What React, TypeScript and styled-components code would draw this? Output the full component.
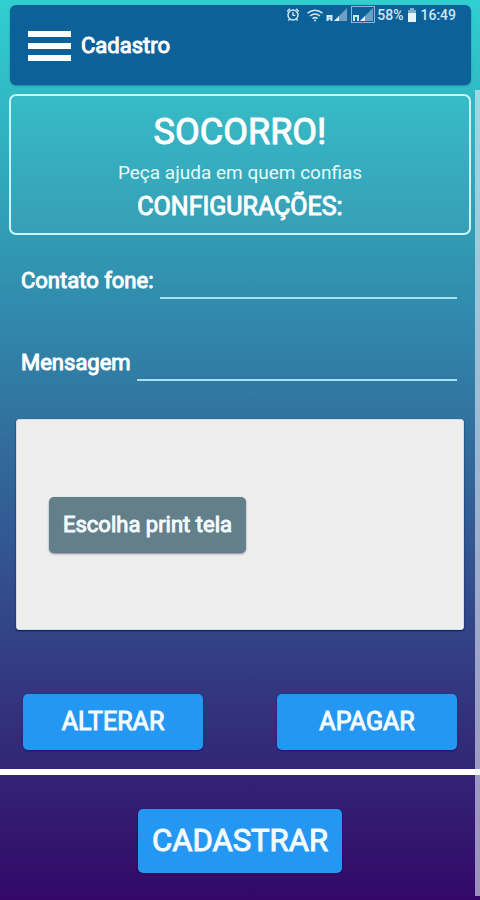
import React from "react";
import styled, { createGlobalStyle, css } from "styled-components";

const GlobalStyle = createGlobalStyle`
  *, *::before, *::after { box-sizing: border-box; }
  body { margin: 0; font-family: Roboto, "Liberation Sans", sans-serif; color: #fff; }
  button, input { font: inherit; color: inherit; }
`;

const emboldened = css`
  font-weight: 400;
  -webkit-text-stroke: 1px currentColor;
`;

const Screen = styled.div`
  position: relative;
  display: flex;
  flex-direction: column;
  min-height: 100vh;
  background: linear-gradient(#30cfd0, #330867);
`;

const Header = styled.header`
  display: flex;
  flex-direction: column;
  margin: 5px 9px 0 10px;
  padding-bottom: 18px;
  border-radius: 6px;
  background: #0b6198;
  box-shadow: 0 1px 2px rgba(0, 60, 90, 0.4);
`;

const StatusBar = styled.div`
  display: flex;
  align-items: center;
  justify-content: flex-end;
  height: 20px;
  padding-right: 15px;
  font-size: 14px;
  line-height: 20px;
  font-weight: 500;
  color: #cfe6f4;
`;

const StatusIcons = styled.svg`
  width: 90px;
  height: 20px;
  margin-right: 2px;
`;

const BatteryIcon = styled.svg`
  width: 10px;
  height: 20px;
  margin: 0 3px 0 4px;
`;

const TitleBar = styled.div`
  display: flex;
  align-items: center;
  gap: 10px;
  padding-left: 17px;
  height: 42px;
`;

const MenuButton = styled.button`
  display: flex;
  padding: 0;
  border: 0;
  background: none;
  cursor: pointer;
`;

const Title = styled.h1`
  margin: 0;
  font-size: 22px;
  line-height: 28px;
  ${emboldened}
`;

const Banner = styled.section`
  display: flex;
  flex-direction: column;
  align-items: center;
  margin: 9px 9px 0;
  padding: 15px 0 12px;
  border: 2px solid #c9f6f6;
  border-radius: 7px;
  background: rgba(255, 255, 255, 0.03);
  text-align: center;
`;

const BannerHeading = styled.h2<{ $size: number; $line: number }>`
  margin: 0;
  font-size: ${(p) => p.$size}px;
  line-height: ${(p) => p.$line}px;
  ${emboldened}
`;

const Tagline = styled.p`
  margin: 0;
  font-size: 19px;
  line-height: 40px;
  color: #e2fbfb;
`;

const Form = styled.form`
  display: flex;
  flex: 1;
  flex-direction: column;
`;

const Field = styled.div`
  display: flex;
  align-items: flex-end;
  gap: 6px;
  height: 64px;
  margin: 0 23px 18px 21px;
`;

const Label = styled.label`
  padding-bottom: 4px;
  font-size: 22px;
  line-height: 28px;
  ${emboldened}
`;

const TextInput = styled.input`
  flex: 1;
  min-width: 0;
  height: 36px;
  padding: 0 4px;
  border: 0;
  border-bottom: 2px solid #a5e2ef;
  background: none;
  font-size: 20px;
  outline: none;
`;

const PreviewPanel = styled.div`
  display: flex;
  align-items: center;
  height: 211px;
  margin: 20px 16px 0;
  padding-left: 32px;
  border: 1px solid #d3dbe4;
  border-radius: 3px;
  background: #eee;
  box-shadow: 0 1px 2px rgba(0, 20, 90, 0.8);
`;

const Button = styled.button<{ $kind?: "small" | "large" | "neutral" }>`
  height: ${(p) => (p.$kind === "large" ? 64 : 56)}px;
  padding: 0 14px;
  border: 0;
  border-radius: 5px;
  background: ${(p) => (p.$kind === "neutral" ? "#627f8a" : "#2497f3")};
  font-size: ${(p) => (p.$kind === "large" ? 31 : p.$kind === "small" ? 25 : 22)}px;
  line-height: 36px;
  ${emboldened}
  color: #f4fbff;
  box-shadow: 0 1px 2px rgba(10, 0, 70, 0.45);
  cursor: pointer;
`;

const Actions = styled.div`
  display: flex;
  justify-content: space-between;
  margin: 64px 23px 19px;

  ${Button} { width: 180px; }
`;

const Footer = styled.footer`
  display: flex;
  flex: 1;
  align-items: center;
  justify-content: center;
  padding-top: 6px;
  border-top: 6px solid #fff;
`;

const ScrollThumb = styled.div`
  position: absolute;
  top: 90px;
  right: 0;
  bottom: 4px;
  width: 5px;
  background: rgba(235, 240, 250, 0.58);
`;

function PhoneStatus() {
  return (
    <StatusBar>
      <StatusIcons viewBox="0 0 90 20" fill="none" stroke="#cfe6f4" aria-hidden="true">
        <circle cx="8" cy="10" r="5" strokeWidth="1.5" />
        <path d="M8 7v3.4h2.4M2.2 6.4l2.6-2.6M13.8 6.4l-2.6-2.6M4.6 14l-1.2 1.6M11.4 14l1.2 1.6" strokeWidth="1.4" />
        <path d="M22.5 8.2q7.5-6 15 0M25 11q5-4 10 0M27.5 13.6q2.5-2 5 0" strokeWidth="1.6" />
        <circle cx="30" cy="15.6" r="1" fill="#cfe6f4" stroke="none" />
        <path d="M49 16L62 3v13z" fill="#6f9fc3" stroke="none" />
        <path d="M49 16l5-5v5z" fill="#e5f3fb" stroke="none" />
        <path d="M42.5 16v-5h4v5M42.5 13.5h4" strokeWidth="2" />
        <rect x="66.5" y="1.5" width="23" height="16" stroke="#8fb5d1" />
        <path d="M75 16L88 3v13z" fill="#6f9fc3" stroke="none" />
        <path d="M75 16l5-5v5z" fill="#e5f3fb" stroke="none" />
        <path d="M69 16v-5h4v5" strokeWidth="2" />
      </StatusIcons>
      <span>58%</span>
      <BatteryIcon viewBox="0 0 10 20" aria-hidden="true">
        <path d="M3 3h4v2h2v3H1V5h2z" fill="#83adcb" />
        <path d="M1 8h8v9H1z" fill="#e5f3fb" />
      </BatteryIcon>
      <span>16:49</span>
    </StatusBar>
  );
}

export default function App() {
  return (
    <>
      <GlobalStyle />
      <Screen>
        <Header>
          <PhoneStatus />
          <TitleBar>
            <MenuButton type="button" aria-label="Menu">
              <svg width="44" height="30" viewBox="0 0 44 30" fill="#fff" aria-hidden="true">
                <path d="M1 0h43v6H1zM1 12h43v6H1zM1 24h43v6H1z" />
              </svg>
            </MenuButton>
            <Title>Cadastro</Title>
          </TitleBar>
        </Header>
        <Banner>
          <BannerHeading $size={36} $line={42}>SOCORRO!</BannerHeading>
          <Tagline>Peça ajuda em quem confias</Tagline>
          <BannerHeading $size={25} $line={28}>CONFIGURAÇÕES:</BannerHeading>
        </Banner>
        <Form onSubmit={(e) => e.preventDefault()}>
          <Field>
            <Label htmlFor="phone">Contato fone:</Label>
            <TextInput id="phone" type="tel" />
          </Field>
          <Field>
            <Label htmlFor="message">Mensagem</Label>
            <TextInput id="message" type="text" />
          </Field>
          <PreviewPanel>
            <Button type="button" $kind="neutral">Escolha print tela</Button>
          </PreviewPanel>
          <Actions>
            <Button type="button" $kind="small">ALTERAR</Button>
            <Button type="button" $kind="small">APAGAR</Button>
          </Actions>
          <Footer>
            <Button type="submit" $kind="large">CADASTRAR</Button>
          </Footer>
        </Form>
        <ScrollThumb />
      </Screen>
    </>
  );
}
